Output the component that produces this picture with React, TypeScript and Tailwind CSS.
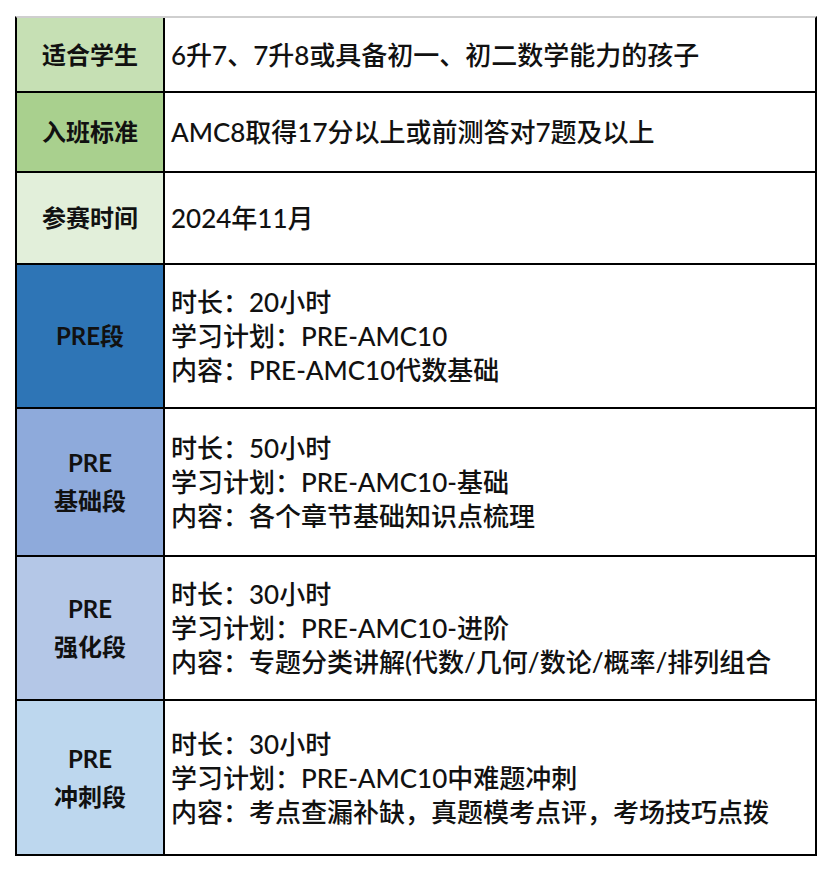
const rows = [
  { label: ["适合学生"], bg: "bg-[#c6e0b4]", h: "h-[75px]", lines: ["6升7、7升8或具备初一、初二数学能力的孩子"] },
  { label: ["入班标准"], bg: "bg-[#a9d08e]", h: "h-[80px]", lines: ["AMC8取得17分以上或前测答对7题及以上"] },
  { label: ["参赛时间"], bg: "bg-[#e2efda]", h: "h-[92px]", lines: ["2024年11月"] },
  {
    label: ["PRE段"],
    bg: "bg-[#2e75b6]",
    h: "h-[144px]",
    lines: ["时长：20小时", "学习计划：PRE-AMC10", "内容：PRE-AMC10代数基础"],
  },
  {
    label: ["PRE", "基础段"],
    bg: "bg-[#8eaadb]",
    h: "h-[148px]",
    lines: ["时长：50小时", "学习计划：PRE-AMC10-基础", "内容：各个章节基础知识点梳理"],
  },
  {
    label: ["PRE", "强化段"],
    bg: "bg-[#b4c7e7]",
    h: "h-[144px]",
    lines: ["时长：30小时", "学习计划：PRE-AMC10-进阶", "内容：专题分类讲解(代数/几何/数论/概率/排列组合"],
  },
  {
    label: ["PRE", "冲刺段"],
    bg: "bg-[#bdd7ee]",
    h: "h-[153px]",
    lines: ["时长：30小时", "学习计划：PRE-AMC10中难题冲刺", "内容：考点查漏补缺，真题模考点评，考场技巧点拨"],
  },
];

export default function App() {
  return (
    <div className="min-h-[872px] bg-white pl-[15px] pt-[16px] font-['Lato','Noto_Sans_CJK_SC',sans-serif] text-[#111]">
      <div className="w-[802px] border-x-2 border-b-2 border-t-2 border-black border-t-[#cfcfcf]">
        {rows.map((row, i) => (
          <div
            key={i}
            className={`flex ${row.h} ${i < rows.length - 1 ? "border-b-2 border-black" : ""}`}
          >
            <div
              className={`flex w-[148px] shrink-0 flex-col items-center justify-center border-r-2 border-black ${row.bg} text-[24px] font-bold leading-[38px] text-[#111]`}
            >
              {row.label.map((l) => (
                <span key={l}>{l}</span>
              ))}
            </div>
            <div className="flex flex-1 flex-col justify-center pl-[6px] text-[26px] font-medium leading-[34px]">
              {row.lines.map((l) => (
                <span key={l} className="whitespace-nowrap">
                  {l}
                </span>
              ))}
            </div>
          </div>
        ))}
      </div>
    </div>
  );
}
